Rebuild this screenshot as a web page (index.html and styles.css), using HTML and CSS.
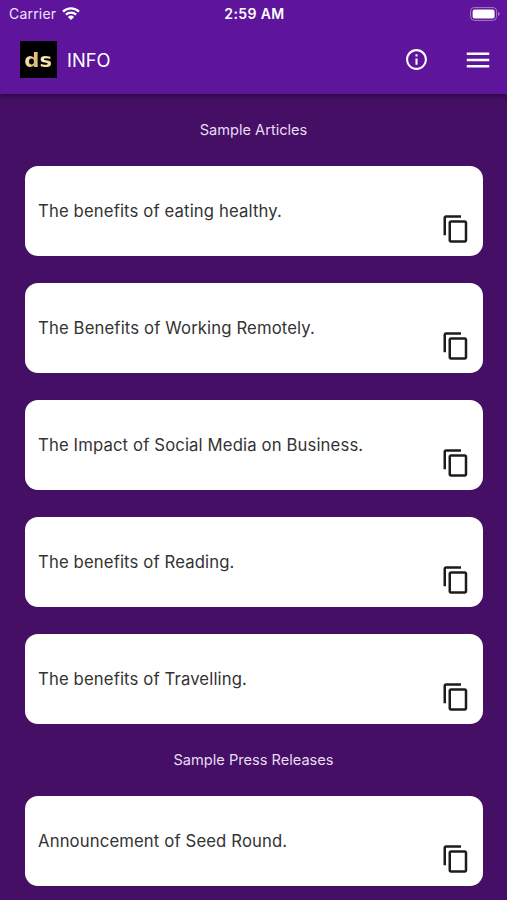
FILE: index.html
```html
<!DOCTYPE html>
<html lang="en">
<head>
    <meta charset="UTF-8">
    <meta name="viewport" content="width=device-width, initial-scale=1.0">
    <title>Info</title>
    <link rel="stylesheet" href="styles.css">
</head>
<body>
    <svg class="sprite" width="0" height="0">
        <symbol id="copy" viewBox="0 0 24 24">
            <path d="M16 1H4c-1.1 0-2 .9-2 2v14h2V3h12V1zm3 4H8c-1.1 0-2 .9-2 2v14c0 1.1.9 2 2 2h11c1.1 0 2-.9 2-2V7c0-1.1-.9-2-2-2zm0 16H8V7h11v14z"/>
        </symbol>
    </svg>

    <header>
        <div class="status-bar">
            <div class="carrier">
                <span>Carrier</span>
                <svg class="wifi" viewBox="0 0 18 13">
                    <path d="M1 4.6a11.6 11.6 0 0 1 16 0M3.9 7.6a7.4 7.4 0 0 1 10.2 0" fill="none" stroke="#fff" stroke-width="2.3"/>
                    <path d="M9 13L5.9 9.9a4.4 4.4 0 0 1 6.2 0z" fill="#fff"/>
                </svg>
            </div>
            <div class="time">2:59 AM</div>
            <svg class="battery" viewBox="0 0 31 14">
                <rect x=".6" y=".6" width="26" height="12.8" rx="4" fill="none" stroke="#fff" stroke-opacity=".45"/>
                <rect x="2.6" y="2.6" width="22" height="8.8" rx="2.2" fill="#fff"/>
                <path d="M28.2 4.8q3 2.2 0 4.4z" fill="#fff" fill-opacity=".5"/>
            </svg>
        </div>
        <div class="app-bar">
            <div class="logo"><span>ds</span></div>
            <h1>INFO</h1>
            <svg class="info-icon" viewBox="0 0 24 24">
                <path d="M11 7h2v2h-2zm0 4h2v6h-2zm1-9C6.48 2 2 6.48 2 12s4.48 10 10 10 10-4.48 10-10S17.52 2 12 2zm0 18c-4.41 0-8-3.59-8-8s3.59-8 8-8 8 3.59 8 8-3.59 8-8 8z"/>
            </svg>
            <svg class="menu-icon" viewBox="0 0 24 24">
                <path d="M3 18h18v-2H3v2zm0-5h18v-2H3v2zm0-7v2h18V6H3z"/>
            </svg>
        </div>
    </header>

    <main>
        <h2>Sample Articles</h2>
        <div class="cards">
            <div class="card">
                <p>The benefits of eating healthy.</p>
                <svg class="copy"><use href="#copy"/></svg>
            </div>
            <div class="card">
                <p>The Benefits of Working Remotely.</p>
                <svg class="copy"><use href="#copy"/></svg>
            </div>
            <div class="card">
                <p>The Impact of Social Media on Business.</p>
                <svg class="copy"><use href="#copy"/></svg>
            </div>
            <div class="card">
                <p>The benefits of Reading.</p>
                <svg class="copy"><use href="#copy"/></svg>
            </div>
            <div class="card">
                <p>The benefits of Travelling.</p>
                <svg class="copy"><use href="#copy"/></svg>
            </div>
        </div>

        <h2>Sample Press Releases</h2>
        <div class="cards">
            <div class="card">
                <p>Announcement of Seed Round.</p>
                <svg class="copy"><use href="#copy"/></svg>
            </div>
        </div>
    </main>
</body>
</html>
```

FILE: styles.css
```css
* {
    box-sizing: border-box;
}

body {
    margin: 0;
    height: 900px;
    overflow: hidden;
    background-color: #450f66;
    font-family: Inter, "Liberation Sans", sans-serif;
}

h1, h2, p {
    margin: 0;
    font-weight: 400;
}

svg {
    display: block;
}

.sprite {
    position: absolute;
}

header {
    height: 94px;
    background-color: #5f149c;
    color: #fff;
    box-shadow: 0 2px 6px rgba(0, 0, 0, 0.45);
}

.status-bar {
    display: grid;
    grid-template-columns: 1fr auto 1fr;
    align-items: center;
    height: 27px;
    padding: 0 6px 0 9px;
}

.carrier {
    display: flex;
    align-items: center;
    gap: 6px;
    font-size: 14px;
    letter-spacing: 0.2px;
    color: #f0e4fa;
}

.wifi {
    width: 18px;
    height: 13px;
}

.time {
    margin-right: 1px;
    font-size: 14px;
    font-weight: 600;
    letter-spacing: 0.4px;
}

.battery {
    width: 31px;
    height: 14px;
    justify-self: end;
}

.app-bar {
    display: flex;
    align-items: center;
    height: 65px;
    padding: 0 14.5px 0 20px;
    fill: #fff;
}

.logo {
    display: flex;
    justify-content: center;
    align-items: center;
    width: 37px;
    height: 37px;
    background-color: #000;
}

.logo span {
    background: linear-gradient(100deg, #fdf3c4, #dcb970 45%, #fff3c0 65%, #e6c883);
    background-clip: text;
    -webkit-background-clip: text;
    color: transparent;
    font-family: "DejaVu Sans", sans-serif;
    font-size: 20px;
    font-weight: 700;
    line-height: 1;
    transform: scaleX(1.06);
}

h1 {
    flex: 1;
    margin-left: 10px;
    padding-top: 1px;
    font-size: 18.3px;
}

.info-icon {
    width: 25px;
    height: 25px;
    margin-right: 34px;
}

.menu-icon {
    width: 30px;
    height: 30px;
}

h2 {
    height: 72px;
    line-height: 73px;
    text-align: center;
    font-size: 14.6px;
    color: #e9dcf2;
}

.cards {
    display: flex;
    flex-direction: column;
    gap: 27px;
    padding: 0 24.5px 0 25px;
}

.card {
    display: flex;
    justify-content: space-between;
    align-items: center;
    height: 90px;
    padding: 12px 12px 12px 13px;
    border-radius: 13px;
    background-color: #fff;
}

.card p {
    font-size: 16.7px;
    line-height: 20px;
    letter-spacing: 0.13px;
    color: #333;
}

.copy {
    width: 30px;
    height: 30px;
    align-self: flex-end;
    fill: #1c1c1c;
}
```
